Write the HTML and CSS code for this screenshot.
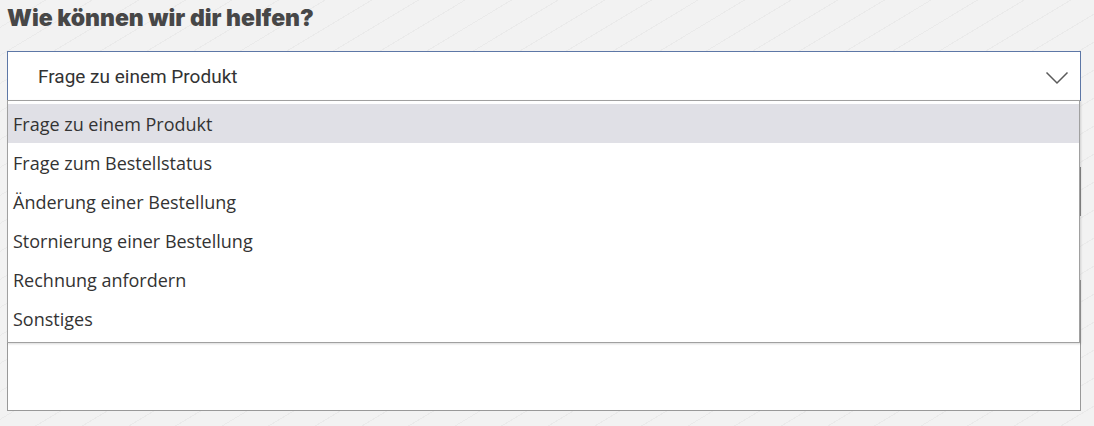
FILE: index.html
```html
<!DOCTYPE html>
<html lang="de">
<head>
<meta charset="utf-8">
<title>Kontakt</title>
<link rel="stylesheet" href="styles.css">
</head>
<body>
<main class="page">
  <h2 class="title">Wie können wir dir helfen?</h2>
  <form class="form">
    <div class="select-wrap">
      <div class="select">
        <span class="select-value">Frage zu einem Produkt</span>
        <svg class="chevron" width="24" height="14" viewBox="0 0 24 14"><path d="M1.5 1.5 L12 12 L22.5 1.5" fill="none" stroke="#5a5a5a" stroke-width="1.5"/></svg>
      </div>
      <ul class="options">
        <li class="option is-active">Frage zu einem Produkt</li>
        <li class="option">Frage zum Bestellstatus</li>
        <li class="option">Änderung einer Bestellung</li>
        <li class="option">Stornierung einer Bestellung</li>
        <li class="option">Rechnung anfordern</li>
        <li class="option">Sonstiges</li>
      </ul>
    </div>
    <div class="input"></div>
    <div class="textarea"></div>
  </form>
</main>
</body>
</html>
```
FILE: styles.css
```css
html, body {
  margin: 0;
  padding: 0;
}
body {
  background-color: #f2f2f2;
  background-image: repeating-linear-gradient(149deg, transparent 0, transparent 23px, #eaeaea 23px, #eaeaea 24px);
  width: 1094px;
  height: 426px;
  overflow: hidden;
}
.page {
  padding: 0 13px 0 7px;
}
.title {
  margin: 0;
  padding-top: 4px;
  height: 47px;
  font-family: Inter, "Liberation Sans", sans-serif;
  font-weight: 900;
  font-size: 23px;
  line-height: 28px;
  color: #474747;
  letter-spacing: 0;
}
.form {
  display: flex;
  flex-direction: column;
}
.select-wrap {
  position: relative;
}
.select {
  box-sizing: border-box;
  height: 50px;
  background: #fff;
  border: 1px solid #5d77a6;
  display: flex;
  align-items: center;
  justify-content: space-between;
  padding: 0 11px 0 30px;
}
.select-value {
  font-family: Roboto, "Liberation Sans", sans-serif;
  font-size: 19px;
  color: #333;
}
.chevron {
  display: block;
  margin-top: 4px;
}
.options {
  position: absolute;
  left: 0;
  right: 1px;
  top: 49px;
  margin: 0;
  padding: 3px 0 4px;
  list-style: none;
  background: #fff;
  border: 1px solid #a0a0a0;
  box-shadow: 1px 1px 2px rgba(0,0,0,0.15);
  z-index: 2;
}
.option {
  height: 39px;
  line-height: 41px;
  padding-left: 5px;
  font-family: "Open Sans", "Noto Sans", sans-serif;
  font-size: 18px;
  color: #333;
}
.option.is-active {
  background: #e0e0e6;
}
.input {
  margin-top: 66px;
  height: 49px;
  box-sizing: border-box;
  background: #fff;
  border: 1px solid #8a8a8a;
}
.textarea {
  margin-top: 64px;
  height: 131px;
  box-sizing: border-box;
  background: #fff;
  border: 1px solid #999;
}
```
